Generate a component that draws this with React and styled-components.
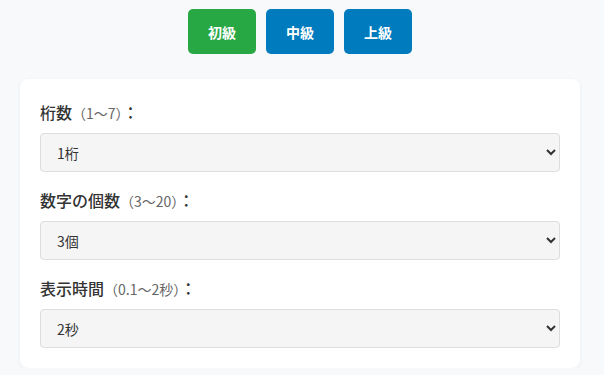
import React from "react";
import styled, { createGlobalStyle } from "styled-components";

const GlobalStyle = createGlobalStyle`
  html, body {
    margin: 0;
    padding: 0;
    background: #f8f9fa;
    font-family: "Noto Sans CJK JP", "Noto Sans", sans-serif;
    color: #333;
  }
`;

const levels = [
  { name: "初級", color: "#28a745" },
  { name: "中級", color: "#007bbd" },
  { name: "上級", color: "#007bbd" },
];

const fields = [
  { label: "桁数", hint: "（1〜7）", options: ["1桁", "2桁", "3桁", "4桁", "5桁", "6桁", "7桁"] },
  { label: "数字の個数", hint: "（3〜20）", options: ["3個", "5個", "10個", "15個", "20個"] },
  { label: "表示時間", hint: "（0.1〜2秒）", options: ["2秒", "1秒", "0.5秒", "0.1秒"] },
];

const App = () => {
  return (
    <Page>
      <GlobalStyle />
      <LevelBar>
        {levels.map((lv) => (
          <LevelBtn key={lv.name} $color={lv.color}>{lv.name}</LevelBtn>
        ))}
      </LevelBar>
      <Card>
        {fields.map((f) => (
          <Group key={f.label}>
            <Label>
              {f.label}
              <Hint>{f.hint}</Hint>：
            </Label>
            <Select defaultValue={f.options[0]}>
              {f.options.map((o) => (
                <option key={o}>{o}</option>
              ))}
            </Select>
          </Group>
        ))}
      </Card>
    </Page>
  );
};

const Page = styled.div`
  padding: 9px 24px 0 20px;
  display: flex;
  flex-direction: column;
  gap: 25px;
`;

const LevelBar = styled.div`
  display: flex;
  justify-content: center;
  gap: 10px;
`;

const LevelBtn = styled.button`
  width: 68px;
  height: 45px;
  border: none;
  border-radius: 5px;
  background-color: ${(p) => p.$color};
  color: white;
  font-family: inherit;
  font-size: 14px;
  font-weight: bold;
  cursor: pointer;
`;

const Card = styled.div`
  background: white;
  border-radius: 8px;
  box-shadow: 0 1px 4px rgba(0, 0, 0, 0.06);
  padding: 22px 20px 20px;
  display: flex;
  flex-direction: column;
  gap: 17px;
`;

const Group = styled.div`
  display: flex;
  flex-direction: column;
  gap: 9px;
`;

const Label = styled.label`
  font-size: 16px;
  font-weight: 500;
  line-height: 22px;
  color: #333;
`;

const Hint = styled.span`
  font-size: 14px;
  font-weight: normal;
  color: #666;
`;

const Select = styled.select`
  width: 100%;
  height: 39px;
  padding: 0 12px;
  border: 1px solid #ddd;
  border-radius: 4px;
  background-color: #f5f5f5;
  color: #333;
  font-family: inherit;
  font-size: 14px;
`;

export default App;
